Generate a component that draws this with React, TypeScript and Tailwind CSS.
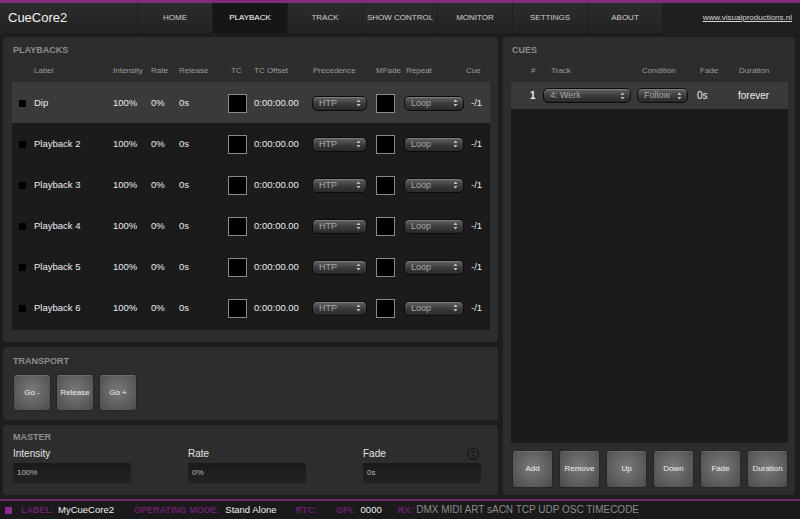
import React from "react";

const Arrows = () => (
  <svg width="5" height="8" viewBox="0 0 5 8" className="shrink-0">
    <path d="M2.5 0.5 L4.5 3 L0.5 3 Z" fill="#c4c4c4" />
    <path d="M0.5 5 L4.5 5 L2.5 7.5 Z" fill="#c4c4c4" />
  </svg>
);

function Select({ text, className }: { text: string; className: string }) {
  return (
    <div
      className={
        "flex h-[15px] items-center justify-between rounded-[5px] border border-[#0b0b0b] bg-linear-to-b from-[#656565] via-[#3c3c3c] to-[#292929] pl-[6px] pr-[5px] text-[9px] leading-none text-[#a8a8a8] shadow-[inset_0_1px_0_rgba(255,255,255,0.18)] " +
        className
      }
    >
      <span>{text}</span>
      <Arrows />
    </div>
  );
}

const Box = () => <div className="h-[19px] w-[19px] border border-[#8a8a8a] bg-black" />;

function PRow({ label, sel }: { label: string; sel?: boolean }) {
  return (
    <div className={"flex h-[41px] items-center pt-[1px] text-[9.5px] text-[#ececec] " + (sel ? "bg-[#3a3a3a]" : "")}>
      <div className="w-[22px] pl-[7px]">
        <div className="h-[7px] w-[7px] bg-black" />
      </div>
      <div className="w-[79px]">{label}</div>
      <div className="w-[38px]">100%</div>
      <div className="w-[28px]">0%</div>
      <div className="w-[49px]">0s</div>
      <div className="w-[26px]">
        <Box />
      </div>
      <div className="w-[58px]">0:00:00.00</div>
      <div className="w-[64px]">
        <Select text="HTP" className="w-[55px]" />
      </div>
      <div className="w-[28px]">
        <Box />
      </div>
      <div className="w-[67px]">
        <Select text="Loop" className="w-[60px]" />
      </div>
      <div>-/1</div>
    </div>
  );
}

function Btn({ label, className }: { label: string; className: string }) {
  return (
    <div
      className={
        "flex items-center justify-center rounded-[3px] border border-[#262626] bg-[radial-gradient(ellipse_at_50%_45%,#7a7a7a,#4b4b4b)] text-[8px] text-[#f0f0f0] shadow-[inset_0_1px_0_rgba(255,255,255,0.12)] " +
        className
      }
    >
      {label}
    </div>
  );
}

const tabs = ["HOME", "PLAYBACK", "TRACK", "SHOW CONTROL", "MONITOR", "SETTINGS", "ABOUT"];

export default function App() {
  return (
    <div className="flex h-[519px] w-[800px] flex-col overflow-hidden bg-[#1d1d1d] font-['Liberation_Sans',Arial,sans-serif]">
      <div className="h-[3px] bg-[#7d2c7f]" />
      {/* header */}
      <div className="flex h-[30px] bg-linear-to-b from-[#2c2c2c] to-[#232323]">
        <div className="flex w-[137px] items-center pl-[8px] text-[13px] text-[#f2f2f2]">CueCore2</div>
        {tabs.map((t) => (
          <div
            key={t}
            className={
              "flex w-[75px] items-center justify-center border-l border-[#1e1e1e] text-[8px] " +
              (t === "PLAYBACK" ? "bg-[#161616] text-white" : "text-[#d0d0d0]")
            }
          >
            {t}
          </div>
        ))}
        <div className="flex flex-1 items-center justify-end border-l border-[#1e1e1e] bg-[#1f1f1f] pr-[8px] text-[8px] text-[#d6d6d6] underline">
          www.visualproductions.nl
        </div>
      </div>

      {/* main */}
      <div className="flex flex-1 gap-[5px] px-[3px] pt-[4px] pb-[4px]">
        {/* left column */}
        <div className="flex w-[495px] flex-col gap-[5px]">
          {/* playbacks */}
          <div className="h-[305px] rounded-[4px] bg-[#2d2d2d] pl-[9px] pr-[8px] pt-[7px]">
            <div className="pl-[1px] text-[9px] font-bold leading-[12px] text-[#8e8e8e]">PLAYBACKS</div>
            <div className="mt-[10px] flex h-[10px] items-center text-[8px] text-[#9c9c9c]">
              <div className="w-[22px]" />
              <div className="w-[79px]">Label</div>
              <div className="w-[38px]">Intensity</div>
              <div className="w-[28px]">Rate</div>
              <div className="w-[49px]">Release</div>
              <div className="w-[26px] pl-[3px]">TC</div>
              <div className="w-[58px]">TC Offset</div>
              <div className="w-[64px] pl-[1px]">Precedence</div>
              <div className="w-[28px]">MFade</div>
              <div className="w-[62px] pl-[2px]">Repeat</div>
              <div>Cue</div>
            </div>
            <div className="mt-[6px] h-[248px] bg-[#1b1b1b]">
              <PRow label="Dip" sel />
              <PRow label="Playback 2" />
              <PRow label="Playback 3" />
              <PRow label="Playback 4" />
              <PRow label="Playback 5" />
              <PRow label="Playback 6" />
            </div>
          </div>
          {/* transport */}
          <div className="h-[73px] rounded-[4px] bg-[#2d2d2d] px-[10px] pt-[8px]">
            <div className="text-[9px] font-bold leading-[12px] text-[#8e8e8e]">TRANSPORT</div>
            <div className="mt-[7px] flex gap-[5px]">
              <Btn label="Go -" className="h-[37px] w-[38px]" />
              <Btn label="Release" className="h-[37px] w-[38px]" />
              <Btn label="Go +" className="h-[37px] w-[38px]" />
            </div>
          </div>
          {/* master */}
          <div className="h-[70px] rounded-[4px] bg-[#2d2d2d] px-[10px] pt-[6px]">
            <div className="text-[9px] font-bold leading-[12px] text-[#8e8e8e]">MASTER</div>
            <div className="mt-[5px] flex">
              {[
                ["Intensity", "100%"],
                ["Rate", "0%"],
                ["Fade", "0s"],
              ].map(([l, v], i) => (
                <div key={l} className={i < 2 ? "w-[175px]" : "w-[119px]"}>
                  <div className="flex items-center justify-between">
                    <span className="text-[10px] leading-[12px] text-[#e6e6e6]">{l}</span>
                    {i === 2 && (
                      <span className="mr-[3px] flex h-[12px] w-[12px] items-center justify-center rounded-full border-[1.5px] border-[#0d0d0d] text-[8px] font-bold leading-none text-[#0d0d0d]">
                        ?
                      </span>
                    )}
                  </div>
                  <div className="mt-[3px] flex h-[20px] w-[118px] items-center bg-linear-to-b from-[#1a1a1a] to-[#232323] pl-[4px] text-[8px] text-[#bcbcbc]">
                    {v}
                  </div>
                </div>
              ))}
            </div>
          </div>
        </div>

        {/* cues */}
        <div className="flex w-[292px] flex-col rounded-[4px] bg-[#2d2d2d] pl-[8px] pr-[7px] pt-[7px] pb-[7px]">
          <div className="pl-[1px] text-[9px] font-bold leading-[12px] text-[#8e8e8e]">CUES</div>
          <div className="mt-[10px] flex h-[10px] items-center text-[8px] text-[#9c9c9c]">
            <div className="w-[32px] pl-[20px]">#</div>
            <div className="w-[94px] pl-[8px]">Track</div>
            <div className="w-[60px] pl-[5px]">Condition</div>
            <div className="w-[41px] pl-[3px]">Fade</div>
            <div className="pl-[1px]">Duration</div>
          </div>
          <div className="mt-[6px] flex-1 bg-[#1b1b1b]">
            <div className="flex h-[27px] items-center bg-[#3a3a3a] text-[10px] text-[#ececec]">
              <div className="w-[32px] pl-[19px] font-bold">1</div>
              <div className="w-[94px]">
                <Select text="4: Werk" className="w-[88px]" />
              </div>
              <div className="w-[60px]">
                <Select text="Follow" className="w-[51px]" />
              </div>
              <div className="w-[41px]">0s</div>
              <div>forever</div>
            </div>
          </div>
          <div className="mt-[7px] flex gap-[6px] pl-[1px]">
            {["Add", "Remove", "Up", "Down", "Fade", "Duration"].map((b) => (
              <Btn key={b} label={b} className="h-[38px] w-[41px]" />
            ))}
          </div>
        </div>
      </div>

      {/* status bar */}
      <div className="h-[2px] bg-[#6e2a70]" />
      <div className="flex h-[18px] items-center bg-[#1a1a1a] text-[9.5px] leading-none">
        <div className="ml-[5px] h-[7px] w-[7px] bg-[#8c2a8e]" />
        <span className="ml-[9px] text-[9px] font-bold text-[#6b1f6d]">LABEL:</span>
        <span className="ml-[4px] text-[#f0f0f0]">MyCueCore2</span>
        <span className="ml-[20px] text-[9px] font-bold text-[#6b1f6d]">OPERATING MODE:</span>
        <span className="ml-[6px] text-[#f0f0f0]">Stand Alone</span>
        <span className="ml-[19px] text-[9px] font-bold text-[#6b1f6d]">RTC:</span>
        <span className="ml-[19px] text-[9px] font-bold text-[#6b1f6d]">GPI:</span>
        <span className="ml-[6px] text-[#f0f0f0]">0000</span>
        <span className="ml-[16px] text-[9px] font-bold text-[#6b1f6d]">RX:</span>
        <span className="ml-[3px] text-[10px] text-[#8a8a8a]">DMX MIDI ART sACN TCP UDP OSC TIMECODE</span>
      </div>
    </div>
  );
}
